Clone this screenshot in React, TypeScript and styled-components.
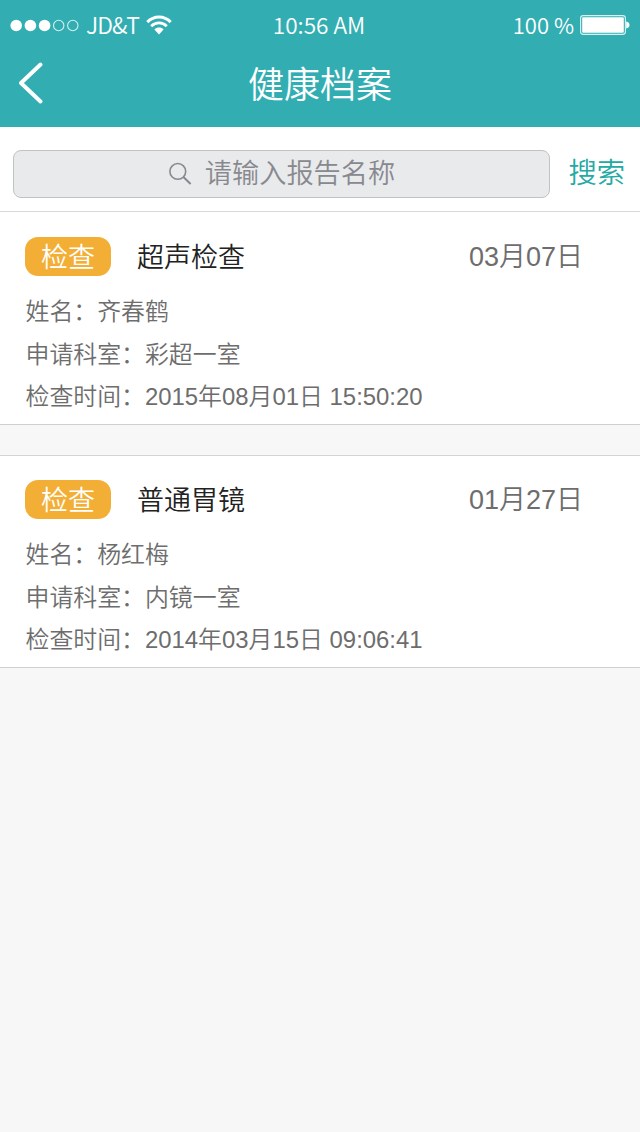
import React from "react";
import styled, { createGlobalStyle } from "styled-components";

const GlobalStyle = createGlobalStyle`
  * { box-sizing: border-box; }
  body {
    margin: 0;
    background: #f7f7f7;
    font-family: "Liberation Sans", "Noto Sans CJK SC", sans-serif;
  }
`;

const Screen = styled.main`
  display: flex;
  flex-direction: column;
  width: 640px;
  min-height: 1132px;
  background: #f7f7f7;
`;

const Header = styled.header`
  height: 127px;
  background: #32aeb2;
  color: #fff;
`;

const StatusBar = styled.div`
  display: grid;
  grid-template-columns: 1fr auto 1fr;
  align-items: center;
  height: 50px;
  padding: 0 10px;
  font: 350 22px/48px "Noto Sans CJK SC", sans-serif;
  white-space: pre;
`;

const Carrier = styled.div`
  display: flex;
  align-items: center;
  height: 50px;
`;

const CarrierName = styled.span`
  margin: 0 7px 0 7px;
  font-size: 23px;
  line-height: 49px;
  height: 50px;
  letter-spacing: -1px;
`;

const Clock = styled.span`
  font-size: 22.6px;
  margin-right: 2px;
`;

const Power = styled.div`
  display: flex;
  align-items: center;
  justify-content: flex-end;
  gap: 6px;
  height: 50px;
`;

const BatteryLevel = styled.span`
  height: 50px;
`;

const NavBar = styled.div`
  display: grid;
  grid-template-columns: 60px 1fr 60px;
  align-items: center;
  height: 66px;
`;

const BackButton = styled.button`
  display: flex;
  padding: 0 0 0 18px;
  border: 0;
  background: none;
`;

const PageTitle = styled.h1`
  height: 66px;
  margin: 0;
  text-align: center;
  font: 350 36px/65px "Noto Sans CJK SC", sans-serif;
`;

const SearchBar = styled.section`
  display: flex;
  align-items: flex-start;
  height: 85px;
  padding: 23px 15px 0 13px;
  border-bottom: 1px solid #d9d9d9;
  background: #fff;
`;

const SearchField = styled.label`
  display: flex;
  align-items: center;
  justify-content: center;
  gap: 13px;
  width: 537px;
  height: 48px;
  border: 1px solid #c1c2c3;
  border-radius: 8px;
  background: #e9eaec;
`;

const Placeholder = styled.span`
  height: 46px;
  color: #88898e;
  font: 350 27.2px/41px "Noto Sans CJK SC", sans-serif;
`;

const SearchButton = styled.button`
  margin-left: auto;
  padding: 0;
  border: 0;
  background: none;
  color: #25a9a4;
  font: 350 28.3px/42px "Noto Sans CJK SC", sans-serif;
`;

const ReportList = styled.div`
  display: flex;
  flex-direction: column;
  gap: 30px;
`;

const ReportCard = styled.article<{ $divided: boolean }>`
  height: 213px;
  padding: ${(p) => (p.$divided ? 24 : 25)}px 57px 0 25px;
  border-top: ${(p) => (p.$divided ? "1px solid #d4d4d4" : "0")};
  border-bottom: 1px solid #cfcfcf;
  background: #fff;
`;

const CardHeading = styled.div`
  display: flex;
  align-items: center;
  height: 39px;
`;

const Badge = styled.span`
  width: 86px;
  height: 39px;
  border-radius: 13px;
  background: #f3ae35;
  color: #fff;
  text-align: center;
  font: 350 27px/38px "Noto Sans CJK SC", sans-serif;
`;

const ReportName = styled.h2`
  height: 39px;
  margin: 0 0 0 26px;
  color: #222;
  font: 350 27px/38px "Noto Sans CJK SC", sans-serif;
`;

const ReportDate = styled.time`
  margin-left: auto;
  color: #6d6d6d;
  font-size: 27px;
  font-weight: 350;
  line-height: 39px;
  padding-top: 2px;
`;

const Details = styled.div`
  padding-top: 14px;
`;

const Detail = styled.p`
  height: 42.6px;
  margin: 0;
  padding-left: 0.5px;
  color: #6d6d6d;
  font-size: 23.9px;
  font-weight: 350;
  line-height: 43px;
  white-space: pre;
`;

const SignalIcon = () => (
  <svg width="69" height="14" viewBox="0 0 69 14">
    {[6.2, 20.4, 34.6].map((x) => (
      <circle key={x} cx={x} cy="7.5" r="5.8" fill="#fff" />
    ))}
    {[48.7, 62.8].map((x) => (
      <circle key={x} cx={x} cy="7.5" r="5.2" fill="none" stroke="#d3eff0" strokeWidth="1.1" />
    ))}
  </svg>
);

const WifiIcon = () => (
  <svg width="26" height="20" viewBox="0 0 26 20" fill="none" stroke="#fff">
    <path d="M1.3 7.1C8.1 .3 17.9 .3 24.7 7.1" strokeWidth="3.1" />
    <path d="M5.2 11.2C9.7 6.8 16.3 6.8 20.8 11.2" strokeWidth="2.8" />
    <path d="M8.4 14.5C11 11.9 15 11.9 17.6 14.5L13 19.4Z" fill="#fff" stroke="none" />
  </svg>
);

const BatteryIcon = () => (
  <svg width="50" height="20" viewBox="0 0 50 20">
    <rect x=".6" y=".6" width="44.8" height="18.8" rx="2.6" fill="none" stroke="#d8f1f2" strokeWidth="1.1" />
    <rect x="2.2" y="2.2" width="41.6" height="15.6" rx="1" fill="#fff" />
    <path d="M46.2 6.6C50.6 7 50.6 13 46.2 13.4Z" fill="#fff" />
  </svg>
);

const BackIcon = () => (
  <svg width="26" height="42" viewBox="0 0 26 42" fill="none">
    <path d="M22.5 2.5L3 21L22.5 39.5" stroke="#fff" strokeWidth="3.9" strokeLinecap="round" strokeLinejoin="round" />
  </svg>
);

const SearchIcon = () => (
  <svg width="24" height="24" viewBox="0 0 24 24" fill="none" stroke="#88898e">
    <circle cx="9.8" cy="9.4" r="7.9" strokeWidth="1.6" />
    <path d="M15.4 15L22.6 22" strokeWidth="2" />
  </svg>
);

const reports = [
  { name: "超声检查", date: "03月07日", patient: "齐春鹤", room: "彩超一室", time: "2015年08月01日 15:50:20" },
  { name: "普通胃镜", date: "01月27日", patient: "杨红梅", room: "内镜一室", time: "2014年03月15日 09:06:41" },
];

export default function App() {
  return (
    <>
      <GlobalStyle />
      <Screen>
        <Header>
          <StatusBar>
            <Carrier>
              <SignalIcon />
              <CarrierName>JD&amp;T</CarrierName>
              <WifiIcon />
            </Carrier>
            <Clock>10:56 AM</Clock>
            <Power>
              <BatteryLevel>100 %</BatteryLevel>
              <BatteryIcon />
            </Power>
          </StatusBar>
          <NavBar>
            <BackButton aria-label="返回">
              <BackIcon />
            </BackButton>
            <PageTitle>健康档案</PageTitle>
          </NavBar>
        </Header>
        <SearchBar>
          <SearchField>
            <SearchIcon />
            <Placeholder>请输入报告名称</Placeholder>
          </SearchField>
          <SearchButton>搜索</SearchButton>
        </SearchBar>
        <ReportList>
          {reports.map((report, index) => (
            <ReportCard key={report.name} $divided={index > 0}>
              <CardHeading>
                <Badge>检查</Badge>
                <ReportName>{report.name}</ReportName>
                <ReportDate>{report.date}</ReportDate>
              </CardHeading>
              <Details>
                <Detail>姓名：{report.patient}</Detail>
                <Detail>申请科室：{report.room}</Detail>
                <Detail>检查时间：{report.time}</Detail>
              </Details>
            </ReportCard>
          ))}
        </ReportList>
      </Screen>
    </>
  );
}
